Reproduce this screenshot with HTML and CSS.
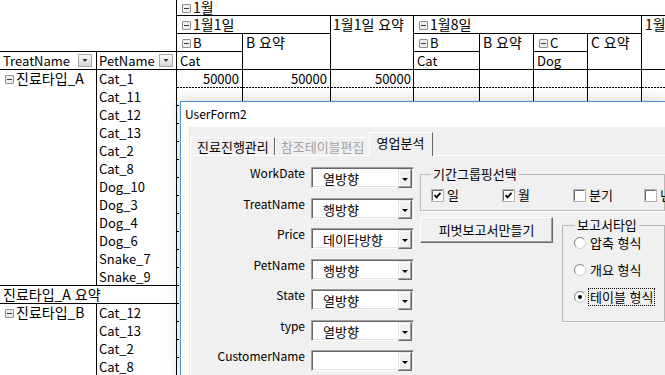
FILE: index.html
```html
<!DOCTYPE html>
<html lang="ko">
<head>
<meta charset="utf-8">
<title>Pivot</title>
<link rel="stylesheet" href="styles.css">
</head>
<body>
<div class="sheet">
  <div class="cell corner"></div>
  <div class="cell ko h-month exp-pad"><span class="exp"></span>1월</div>
  <div class="cell ko h-d1 exp-pad"><span class="exp"></span>1월1일</div>
  <div class="cell ko h-d1sum">1월1일 요약</div>
  <div class="cell ko h-d8 exp-pad"><span class="exp"></span>1월8일</div>
  <div class="cell ko h-next">1월8일 요약</div>
  <div class="cell h-b1 exp-pad"><span class="exp"></span>B</div>
  <div class="cell ko h-b1sum">B 요약</div>
  <div class="cell h-b8 exp-pad"><span class="exp"></span>B</div>
  <div class="cell ko h-b8sum">B 요약</div>
  <div class="cell h-c8 exp-pad"><span class="exp"></span>C</div>
  <div class="cell ko h-c8sum">C 요약</div>
  <div class="cell f-treat filter">TreatName<svg class="fbtn" width="14" height="13" viewBox="0 0 14 13"><defs><linearGradient id="fg" x1="0" y1="0" x2="0" y2="1"><stop offset="0" stop-color="#fdfdfd"/><stop offset="1" stop-color="#d6d6d6"/></linearGradient></defs><rect x=".5" y=".5" width="13" height="12" fill="url(#fg)" stroke="#a8a8a8"/><path d="M4.5 5h5l-2.5 3z" fill="#3a3a3a"/></svg></div>
  <div class="cell f-pet filter">PetName<svg class="fbtn" width="14" height="13" viewBox="0 0 14 13"><rect x=".5" y=".5" width="13" height="12" fill="url(#fg)" stroke="#a8a8a8"/><path d="M4.5 5h5l-2.5 3z" fill="#3a3a3a"/></svg></div>
  <div class="cell k-cat1">Cat</div>
  <div class="cell k-cat8">Cat</div>
  <div class="cell k-dog8">Dog</div>

  <div class="cell ko treat-a exp-pad"><span class="exp"></span>진료타입_A</div>
  <div class="cell pet">Cat_1</div>
  <div class="cell pet">Cat_11</div>
  <div class="cell pet">Cat_12</div>
  <div class="cell pet">Cat_13</div>
  <div class="cell pet">Cat_2</div>
  <div class="cell pet">Cat_8</div>
  <div class="cell pet">Dog_10</div>
  <div class="cell pet">Dog_3</div>
  <div class="cell pet">Dog_4</div>
  <div class="cell pet">Dog_6</div>
  <div class="cell pet">Snake_7</div>
  <div class="cell pet last">Snake_9</div>
  <div class="cell ko sum-a">진료타입_A 요약</div>
  <div class="cell ko treat-b exp-pad"><span class="exp"></span>진료타입_B</div>
  <div class="cell pet pet-b">Cat_12</div>
  <div class="cell pet pet-b">Cat_13</div>
  <div class="cell pet pet-b">Cat_2</div>
  <div class="cell pet pet-b">Cat_8</div>

  <div class="cell val v3 num">50000</div>
  <div class="cell val v4 num">50000</div>
  <div class="cell val v5 num">50000</div>
  <div class="cell val v6"></div>
  <div class="cell val v7"></div>
  <div class="cell val v8"></div>
  <div class="cell val v9"></div>
  <div class="cell val v10"></div>

  <div class="cell body b3"></div>
  <div class="cell body b4"></div>
  <div class="cell body b5"></div>
  <div class="cell body b6"></div>
  <div class="cell body b7"></div>
  <div class="cell body b8"></div>
  <div class="cell body b9"></div>
</div>

<div class="window">
  <div class="titlebar">UserForm2</div>
  <div class="client">
    <div class="tabs">
      <div class="tab first">진료진행관리</div>
      <div class="tab disabled">참조테이블편집</div>
      <div class="tab active">영업분석</div>
    </div>
    <div class="panel">
      <div class="fields">
        <div class="lbl">WorkDate</div>
        <div class="combo"><span class="cval">열방향</span><span class="cbtn"><span class="tri"></span></span></div>
        <div class="lbl">TreatName</div>
        <div class="combo"><span class="cval">행방향</span><span class="cbtn"><span class="tri"></span></span></div>
        <div class="lbl">Price</div>
        <div class="combo"><span class="cval">데이타방향</span><span class="cbtn"><span class="tri"></span></span></div>
        <div class="lbl">PetName</div>
        <div class="combo"><span class="cval">행방향</span><span class="cbtn"><span class="tri"></span></span></div>
        <div class="lbl">State</div>
        <div class="combo"><span class="cval">열방향</span><span class="cbtn"><span class="tri"></span></span></div>
        <div class="lbl">type</div>
        <div class="combo"><span class="cval">열방향</span><span class="cbtn"><span class="tri"></span></span></div>
        <div class="lbl">CustomerName</div>
        <div class="combo"><span class="cval"></span><span class="cbtn"><span class="tri"></span></span></div>
      </div>
      <div class="side">
        <fieldset class="group period">
          <legend>기간그룹핑선택</legend>
          <div class="checks">
            <div class="check"><svg width="13" height="13" viewBox="0 0 13 13"><rect x=".5" y=".5" width="12" height="12" fill="#fff" stroke="#b4b4b4"/><path d="M1.5 11.5V1.5h10" stroke="#6a6a6a" fill="none"/><path d="M3.5 6.2l2 2.2 4-4.6" stroke="#000" stroke-width="1.8" fill="none"/></svg><span>일</span></div>
            <div class="check"><svg width="13" height="13" viewBox="0 0 13 13"><rect x=".5" y=".5" width="12" height="12" fill="#fff" stroke="#b4b4b4"/><path d="M1.5 11.5V1.5h10" stroke="#6a6a6a" fill="none"/><path d="M3.5 6.2l2 2.2 4-4.6" stroke="#000" stroke-width="1.8" fill="none"/></svg><span>월</span></div>
            <div class="check"><svg width="13" height="13" viewBox="0 0 13 13"><rect x=".5" y=".5" width="12" height="12" fill="#fff" stroke="#b4b4b4"/><path d="M1.5 11.5V1.5h10" stroke="#6a6a6a" fill="none"/></svg><span>분기</span></div>
            <div class="check"><svg width="13" height="13" viewBox="0 0 13 13"><rect x=".5" y=".5" width="12" height="12" fill="#fff" stroke="#b4b4b4"/><path d="M1.5 11.5V1.5h10" stroke="#6a6a6a" fill="none"/></svg><span>년</span></div>
          </div>
        </fieldset>
        <div class="side-row">
          <button class="btn" type="button">피벗보고서만들기</button>
          <fieldset class="group report">
            <legend>보고서타입</legend>
            <div class="radio"><svg width="12" height="12" viewBox="0 0 12 12"><circle cx="6" cy="6" r="5.5" fill="#fff" stroke="#d0d0d0"/><path d="M2.1 9.9A5.5 5.5 0 0 1 9.9 2.1" stroke="#8a8a8a" fill="none"/></svg><span class="rl">압축 형식</span></div>
            <div class="radio"><svg width="12" height="12" viewBox="0 0 12 12"><circle cx="6" cy="6" r="5.5" fill="#fff" stroke="#d0d0d0"/><path d="M2.1 9.9A5.5 5.5 0 0 1 9.9 2.1" stroke="#8a8a8a" fill="none"/></svg><span class="rl">개요 형식</span></div>
            <div class="radio"><svg width="12" height="12" viewBox="0 0 12 12"><circle cx="6" cy="6" r="5.5" fill="#fff" stroke="#d0d0d0"/><path d="M2.1 9.9A5.5 5.5 0 0 1 9.9 2.1" stroke="#8a8a8a" fill="none"/><circle cx="6" cy="6" r="2" fill="#000"/></svg><span class="rl focus">테이블 형식</span></div>
          </fieldset>
        </div>
      </div>
    </div>
  </div>
</div>
</body>
</html>
```

FILE: styles.css
```css
html, body {
  margin: 0;
  padding: 0;
  width: 665px;
  height: 375px;
  overflow: hidden;
  background: #fff;
}

.sheet {
  display: grid;
  grid-template-columns: 97px 80px 66px 88px 83px 66px 54px 54px 54px 1fr;
  grid-template-rows: 16px repeat(20, 18px);
  width: 665px;
  height: 375px;
  font: 13px/17px "Noto Sans CJK KR", "Noto Sans", sans-serif;
  color: #000;
}

.cell {
  box-sizing: border-box;
  padding: 0 3px;
  white-space: nowrap;
}

.ko { font-size: 14px; }

.exp-pad { padding-left: 5px; }

.exp {
  display: inline-block;
  width: 9px;
  height: 9px;
  box-sizing: border-box;
  border: 1px solid #8f8f8f;
  border-radius: 1px;
  background: linear-gradient(#3a3a3a, #3a3a3a) center / 5px 1px no-repeat, #eeeeee;
  margin-right: 2px;
}

.corner { grid-column: 1 / 3; grid-row: 1 / 4; border-right: 1px solid #000; border-bottom: 1px solid #000; }
.h-month { grid-column: 3 / 11; grid-row: 1; border-bottom: 1px solid #000; line-height: 15px; }
.h-d1 { grid-column: 3 / 5; grid-row: 2; border-right: 1px solid #000; border-bottom: 1px solid #000; }
.h-d1sum { grid-column: 5; grid-row: 2 / 5; border-right: 1px solid #000; border-bottom: 1px solid #000; padding-left: 2px; }
.h-d8 { grid-column: 6 / 10; grid-row: 2; border-right: 1px solid #000; border-bottom: 1px solid #000; }
.h-next { grid-column: 10; grid-row: 2 / 5; border-bottom: 1px solid #000; }
.h-b1 { grid-column: 3; grid-row: 3; border-right: 1px solid #000; border-bottom: 1px solid #000; }
.h-b1sum { grid-column: 4; grid-row: 3 / 5; border-right: 1px solid #000; border-bottom: 1px solid #000; }
.h-b8 { grid-column: 6; grid-row: 3; border-right: 1px solid #000; border-bottom: 1px solid #000; }
.h-b8sum { grid-column: 7; grid-row: 3 / 5; border-right: 1px solid #000; border-bottom: 1px solid #000; }
.h-c8 { grid-column: 8; grid-row: 3; border-right: 1px solid #000; border-bottom: 1px solid #000; }
.h-c8sum { grid-column: 9; grid-row: 3 / 5; border-right: 1px solid #000; border-bottom: 1px solid #000; }

.filter {
  display: flex;
  align-items: center;
  justify-content: space-between;
  border-right: 1px solid #000;
  border-bottom: 1px solid #000;
  grid-row: 4;
}
.f-treat { grid-column: 1; padding-right: 4px; }
.f-pet { grid-column: 2; padding-left: 2px; padding-right: 3px; }
.fbtn { display: block; flex: none; }

.k-cat1 { grid-column: 3; grid-row: 4; border-right: 1px solid #000; border-bottom: 1px solid #000; }
.k-cat8 { grid-column: 6; grid-row: 4; border-right: 1px solid #000; border-bottom: 1px solid #000; }
.k-dog8 { grid-column: 8; grid-row: 4; border-right: 1px solid #000; border-bottom: 1px solid #000; }

.treat-a { grid-column: 1; grid-row: 5 / 17; border-right: 1px solid #000; border-bottom: 1px solid #000; }
.pet { grid-column: 2; border-right: 1px solid #000; padding-left: 2px; }
.pet.last { border-bottom: 1px solid #000; }
.sum-a { grid-column: 1 / 3; grid-row: 17; border-right: 1px solid #000; border-bottom: 1px solid #000; }
.treat-b { grid-column: 1; grid-row: 18 / 22; border-right: 1px solid #000; }

.val {
  grid-row: 5;
  border-right: 1px solid #000;
  background: repeating-linear-gradient(to right, #000 0 2px, transparent 2px 3px) left bottom / 100% 1px no-repeat;
}
.num { text-align: right; }
.v3 { grid-column: 3; }
.v4 { grid-column: 4; }
.v5 { grid-column: 5; padding-right: 2px; }
.v6 { grid-column: 6; }
.v7 { grid-column: 7; }
.v8 { grid-column: 8; }
.v9 { grid-column: 9; }
.v10 { grid-column: 10; border-right: none; }

.body { grid-row: 6 / 22; border-right: 1px solid #000; }
.b3 {
  grid-column: 3;
  background: repeating-linear-gradient(to bottom, transparent 0 17px, #000 17px 18px) left top / 2px 100% no-repeat;
}
.b4 { grid-column: 4; }
.b5 { grid-column: 5; }
.b6 { grid-column: 6; }
.b7 { grid-column: 7; }
.b8 { grid-column: 8; }
.b9 { grid-column: 9; }

/* ---------- UserForm window ---------- */
.window {
  position: absolute;
  left: 180px;
  top: 101px;
  width: 485px;
  height: 274px;
  overflow: hidden;
  background: #fff;
  border-top: 1px solid #4b8fd6;
  border-left: 1px solid #4b8fd6;
  box-shadow: 0 0 14px rgba(0, 0, 0, 0.2);
  font: 13px/16px "Noto Sans CJK KR", "Noto Sans", sans-serif;
  color: #000;
}

.titlebar {
  height: 25px;
  line-height: 24px;
  padding-left: 4px;
  font-size: 12px;
  background: #fff;
}

.client {
  margin-left: 8px;
  height: 280px;
  background: #f0f0f0;
  border-left: 1px solid #e6e6e6;
}

.tabs {
  display: flex;
  align-items: flex-end;
  height: 28px;
}

.tab {
  box-sizing: border-box;
  height: 18px;
  line-height: 17px;
  padding: 0 5px;
  border-top: 1px solid #fff;
  border-left: 1px solid #fff;
  border-right: 1px solid #696969;
  background: #f0f0f0;
  white-space: nowrap;
}
.tab.first { padding: 0 5px 0 6px; }
.tab.disabled { color: #a3a3a3; }
.tab.active {
  position: relative;
  z-index: 1;
  height: 24px;
  margin-left: -2px;
  margin-bottom: -1px;
  padding: 1px 8px 0 7px;
}

.panel {
  display: flex;
  gap: 6px;
  height: 240px;
  border-top: 1px solid #fff;
  border-left: 1px solid #fff;
  padding-top: 11px;
  box-sizing: border-box;
}

.fields {
  display: grid;
  grid-template-columns: 114px 103px;
  grid-auto-rows: 21px;
  column-gap: 6px;
  row-gap: 9.5px;
  align-content: start;
}

.lbl {
  text-align: right;
  font-size: 12px;
  line-height: 16px;
  margin-top: -2px;
  white-space: nowrap;
}

.combo {
  display: flex;
  box-sizing: border-box;
  height: 21px;
  padding: 1px;
  background: #fff;
  border: 1px solid;
  border-color: #a0a0a0 #fff #fff #a0a0a0;
  box-shadow: inset 1px 1px 0 #696969, inset -1px -1px 0 #e3e3e3;
}
.cval {
  flex: 1;
  padding-left: 10px;
  line-height: 19px;
  white-space: nowrap;
}
.cbtn {
  flex: none;
  display: flex;
  align-items: center;
  justify-content: center;
  box-sizing: border-box;
  width: 14px;
  height: 19px;
  background: #f0f0f0;
  border: 1px solid;
  border-color: #e3e3e3 #696969 #696969 #e3e3e3;
  box-shadow: inset -1px -1px 0 #a0a0a0, inset 1px 1px 0 #fff;
  padding-top: 2px;
}
.tri {
  width: 0;
  height: 0;
  border-left: 3px solid transparent;
  border-right: 3px solid transparent;
  border-top: 3px solid #000;
}

.side {
  display: flex;
  flex-direction: column;
  align-items: flex-start;
}

.group {
  margin: 0;
  box-sizing: border-box;
  border: 1px solid #b9b9b9;
  box-shadow: 1px 1px 0 #fff;
  min-width: 0;
}
.group legend {
  padding: 0 2px;
  line-height: 14px;
}

.period {
  width: 245px;
  padding: 6px 0 7px 0;
}
.period legend { margin-left: 10px; }

.checks {
  display: flex;
  margin-left: 10px;
}
.check {
  display: flex;
  align-items: center;
  gap: 3px;
  width: 71px;
  height: 16px;
  flex: none;
}
.check svg { display: block; flex: none; }

.side-row {
  display: flex;
  align-items: flex-start;
  gap: 9px;
  margin-top: 6px;
}

.btn {
  width: 133px;
  height: 26px;
  margin: 0;
  padding: 0;
  font: 13px/16px "Noto Sans CJK KR", "Noto Sans", sans-serif;
  color: #000;
  background: #f0f0f0;
  border: 1px solid;
  border-color: #fff #696969 #696969 #fff;
  box-shadow: inset -1px -1px 0 #a0a0a0;
}

.report {
  width: 103px;
  margin-top: 1px;
  padding: 2px 0 15px 11px;
}
.report legend { margin-left: 1px; }

.radio {
  display: flex;
  align-items: center;
  height: 18px;
}
.radio + .radio { margin-top: 9px; }
.radio svg { display: block; flex: none; }
.rl {
  margin-left: 2px;
  padding: 0 1px;
  border: 1px dotted transparent;
  line-height: 16px;
  white-space: nowrap;
}
.rl.focus { border-color: #000; }
```
